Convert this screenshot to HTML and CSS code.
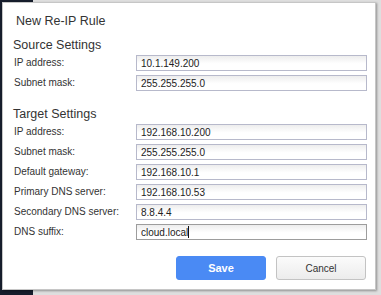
FILE: index.html
```html
<!DOCTYPE html>
<html>
<head>
<title>New Re-IP Rule</title>
<meta name="viewport" content="width=device-width,initial-scale=1"/>
<link rel="stylesheet" href="styles.css">
</head>
<body>
<div class="dialog">
	<h1>New Re-IP Rule</h1>

	<h2>Source Settings</h2>
	<div class="form">
		<label>IP address:</label>
		<input type="text" value="10.1.149.200"/>
		<label>Subnet mask:</label>
		<input type="text" value="255.255.255.0"/>
	</div>

	<h2 class="second">Target Settings</h2>
	<div class="form">
		<label>IP address:</label>
		<input type="text" value="192.168.10.200"/>
		<label>Subnet mask:</label>
		<input type="text" value="255.255.255.0"/>
		<label>Default gateway:</label>
		<input type="text" value="192.168.10.1"/>
		<label>Primary DNS server:</label>
		<input type="text" value="192.168.10.53"/>
		<label>Secondary DNS server:</label>
		<input type="text" value="8.8.4.4"/>
		<label>DNS suffix:</label>
		<div class="field">
			<input type="text" class="focus" value="cloud.local"/>
			<span class="caret"></span>
		</div>
	</div>

	<div class="buttons">
		<button class="button save">Save</button>
		<button class="button cancel">Cancel</button>
	</div>
</div>
</body>
</html>
```

FILE: styles.css
```css
html, body {
	margin: 0;
	height: 100%;
}
body {
	background: linear-gradient(to right, #161d2c 33px, #dedede 33px);
	font-family: "Liberation Sans", Arial, sans-serif;
	font-size: 10px;
	color: #222;
	overflow: hidden;
}
.dialog {
	margin: 2px 0 0 2px;
	width: 374px;
	height: 288px;
	box-sizing: border-box;
	background: white;
	border: 1px solid #c6c6c6;
	box-shadow: 1px 1px 2px rgba(0, 0, 0, 0.35);
	padding: 8px 9px 0 11px;
}
h1 {
	margin: 0 0 5px 2px;
	font-size: 12.5px;
	font-weight: normal;
	line-height: 20px;
	color: #333;
}
h2 {
	margin: 0 0 1px -1px;
	font-size: 12.5px;
	font-weight: normal;
	line-height: 18px;
	color: #333;
}
h2.second {
	margin-top: 14px;
}
.form {
	display: grid;
	grid-template-columns: 122px 231px;
	grid-auto-rows: 16px;
	row-gap: 4px;
	align-items: center;
}
label {
	line-height: 16px;
	color: #333;
}
input[type="text"] {
	width: 100%;
	height: 16px;
	box-sizing: border-box;
	margin: 0;
	padding: 0 0 0 4px;
	border: 1px solid #b7b9cb;
	background: linear-gradient(#ededed, #ffffff 55%);
	font-family: "Liberation Sans", Arial, sans-serif;
	font-size: 10px;
	color: #222;
	outline: none;
}
input.focus {
	border-color: #9d9d9d;
}
.field {
	position: relative;
	height: 16px;
}
.caret {
	position: absolute;
	left: 52px;
	top: 2px;
	width: 1px;
	height: 12px;
	background: #111;
}
.buttons {
	display: flex;
	justify-content: flex-end;
	gap: 10px;
	margin-top: 16px;
	padding-right: 0;
}
.button {
	width: 90px;
	height: 24px;
	border-radius: 3px;
	font-family: "Liberation Sans", Arial, sans-serif;
	font-size: 10px;
	cursor: pointer;
}
.save {
	background: #4a8af4;
	border: 1px solid #4a8af4;
	color: white;
	font-weight: bold;
	font-size: 11px;
}
.cancel {
	background: linear-gradient(#fbfbfb, #ececec);
	border: 1px solid #c3c3c3;
	color: #333;
}
```
